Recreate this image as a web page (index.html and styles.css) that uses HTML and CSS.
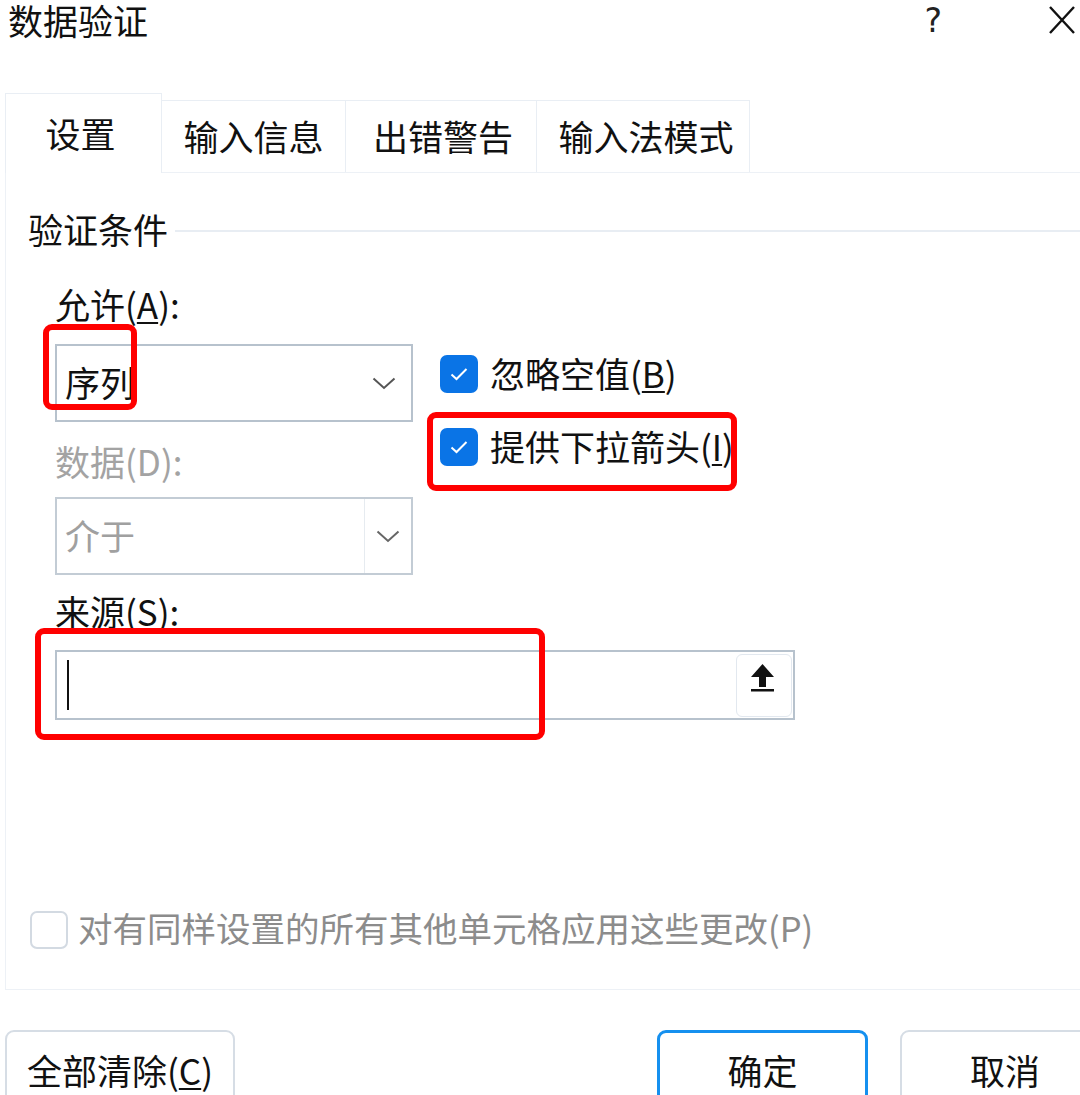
FILE: index.html
```html
<!DOCTYPE html>
<html lang="zh-CN">
<head>
<meta charset="utf-8">
<title>数据验证</title>
<link rel="stylesheet" href="styles.css">
</head>
<body>
<div class="dialog">
  <header class="titlebar">
    <div class="title">数据验证</div>
    <div class="help">?</div>
    <svg class="close" width="28" height="30" viewBox="0 0 28 30"><path d="M2 2 L26 28 M26 2 L2 28" stroke="#111" stroke-width="2.4" fill="none"/></svg>
  </header>

  <nav class="tabs">
    <div class="tab active tab-1">设置</div>
    <div class="tab tab-2">输入信息</div>
    <div class="tab tab-3">出错警告</div>
    <div class="tab tab-4">输入法模式</div>
  </nav>

  <section class="panel">
    <div class="group-head">
      <span class="legend">验证条件</span>
      <span class="rule"></span>
    </div>
    <div class="group-body">
      <div class="row">
        <div class="left-col">
          <div class="label">允许(<u>A</u>):</div>
          <div class="combo">
            <span class="combo-text">序列</span>
            <svg class="chev" width="24" height="13" viewBox="0 0 24 13"><path d="M1.5 1.5 L12 11 L22.5 1.5" stroke="#555" stroke-width="2" fill="none"/></svg>
          </div>
          <div class="label label-2 disabled">数据(D):</div>
          <div class="combo combo-2 disabled">
            <span class="combo-text">介于</span>
            <span class="combo-btn">
              <svg class="chev" width="24" height="13" viewBox="0 0 24 13"><path d="M1.5 1.5 L12 11 L22.5 1.5" stroke="#666" stroke-width="2" fill="none"/></svg>
            </span>
          </div>
        </div>
        <div class="right-col">
          <div class="check">
            <span class="box checked"><svg width="38" height="38" viewBox="0 0 38 38"><path d="M11.5 19.5 L16.5 24 L26.5 14" stroke="#fff" stroke-width="2" fill="none"/></svg></span>
            <span class="check-text">忽略空值(<u>B</u>)</span>
          </div>
          <div class="check check-2">
            <span class="box checked"><svg width="38" height="38" viewBox="0 0 38 38"><path d="M11.5 19.5 L16.5 24 L26.5 14" stroke="#fff" stroke-width="2" fill="none"/></svg></span>
            <span class="check-text">提供下拉箭头(<u>I</u>)</span>
          </div>
        </div>
      </div>
      <div class="label label-src">来源(S):</div>
      <div class="source">
        <span class="caret"></span>
        <span class="ref-btn">
          <svg width="56" height="63" viewBox="0 0 56 63"><path d="M26.5 10 L38 23 L30 23 L30 33 L23 33 L23 23 L15 23 Z" fill="#111"/><rect x="15" y="35" width="23" height="2.5" fill="#111"/></svg>
        </span>
      </div>
    </div>
    <div class="apply-all">
      <span class="box"></span>
      <span class="apply-text">对有同样设置的所有其他单元格应用这些更改(P)</span>
    </div>
  </section>

  <footer class="buttons">
    <div class="btn btn-clear">全部清除(<u>C</u>)</div>
    <div class="btn-group">
      <div class="btn btn-ok">确定</div>
      <div class="btn btn-cancel">取消</div>
    </div>
  </footer>

  <div class="mark mark-1"></div>
  <div class="mark mark-2"></div>
  <div class="mark mark-3"></div>
</div>
</body>
</html>
```

FILE: styles.css
```css
html, body {
  margin: 0;
  padding: 0;
  background: #fff;
  overflow: hidden;
}
body {
  font-family: "Noto Sans CJK SC", "Noto Sans", sans-serif;
  font-size: 35px;
  line-height: 35px;
  color: #111;
}
.dialog {
  position: relative;
  width: 1080px;
  height: 1095px;
  overflow: hidden;
}
u {
  text-decoration-thickness: 2px;
  text-underline-offset: 3px;
}

/* title bar */
.titlebar {
  display: flex;
  align-items: flex-start;
  height: 44px;
  padding-left: 8px;
}
.title {
  line-height: 40px;
}
.help {
  margin-left: auto;
  margin-top: 3px;
  font-family: "DejaVu Sans", sans-serif;
  font-size: 33px;
  line-height: 35px;
  color: #222;
}
.close {
  margin-left: 106px;
  margin-right: 4px;
  margin-top: 5px;
}

/* tabs */
.tabs {
  display: flex;
  align-items: flex-end;
  height: 79px;
  margin-top: 49px;
  margin-left: 5px;
}
.tab {
  box-sizing: border-box;
  height: 72px;
  display: flex;
  align-items: center;
  justify-content: center;
  border: 1px solid #e9eef4;
  border-bottom: none;
  margin-left: -1px;
  background: #fff;
  padding-bottom: 3px;
}
.tab.active {
  height: 80px;
  margin-bottom: -1px;
  margin-left: 0;
  position: relative;
  z-index: 1;
  padding-right: 6px;
}
.tab-1 { width: 157px; }
.tab-2 { width: 185px; }
.tab-3 { width: 192px; padding-left: 4px; }
.tab-4 { width: 214px; padding-left: 6px; }

/* panel */
.panel {
  box-sizing: border-box;
  height: 818px;
  margin-left: 5px;
  margin-right: -20px;
  border: 1px solid #edf1f6;
  padding: 38px 0 40px 22px;
  display: flex;
  flex-direction: column;
}
.group-head {
  display: flex;
  align-items: center;
}
.legend {
  white-space: nowrap;
}
.rule {
  flex: 1;
  height: 2px;
  background: #e8edf3;
  margin-left: 7px;
  margin-top: 4px;
}
.group-body {
  margin-top: 40px;
  padding-left: 27px;
}
.row {
  display: flex;
}
.left-col {
  width: 358px;
}
.label {
  white-space: nowrap;
}
.label-2 { margin-top: 21px; }
.label-src { margin-top: 18px; }
.disabled { color: #a3a3a3; }

.combo {
  box-sizing: border-box;
  height: 78px;
  margin-top: 23px;
  border: 2px solid #b7c2cd;
  display: flex;
  align-items: center;
  padding-left: 8px;
  padding-right: 15px;
  background: #fff;
}
.combo-text {
  flex: 1;
  padding-bottom: 4px;
}
.combo-2 {
  margin-top: 19px;
  border-color: #c3ccd5;
  padding-right: 0;
  color: #a0a0a0;
}
.combo-btn {
  align-self: stretch;
  width: 46px;
  border-left: 1px solid #e6ebf0;
  display: flex;
  align-items: center;
  justify-content: center;
}

.right-col {
  margin-left: 27px;
  margin-top: 69px;
}
.check {
  display: flex;
  align-items: center;
  height: 38px;
}
.check-2 {
  margin-top: 35px;
}
.box {
  box-sizing: border-box;
  width: 38px;
  height: 38px;
  border-radius: 7px;
  border: 2px solid #d3dae2;
  background: #fff;
  flex: none;
}
.box.checked {
  border: none;
  background: #0a74e6;
}
.box svg { display: block; }
.check-text {
  margin-left: 12px;
  white-space: nowrap;
  padding-bottom: 4px;
}

.source {
  box-sizing: border-box;
  width: 740px;
  height: 70px;
  margin-top: 22px;
  border: 2px solid #b7c2cd;
  display: flex;
  align-items: center;
  padding: 0 1px 0 10px;
}
.caret {
  width: 2px;
  height: 50px;
  background: #111;
}
.ref-btn {
  margin-left: auto;
  box-sizing: border-box;
  width: 56px;
  height: 63px;
  border: 1px solid #e2e8ef;
  border-radius: 6px;
  background: #fff;
}
.ref-btn svg {
  display: block;
  margin: -1px 0 0 -1px;
}

.apply-all {
  margin-top: auto;
  display: flex;
  align-items: center;
  padding-left: 2px;
}
.apply-text {
  margin-left: 10px;
  color: #8c8c8c;
  white-space: nowrap;
  font-size: 34.5px;
  padding-bottom: 4px;
}

/* footer buttons */
.buttons {
  display: flex;
  margin-top: 40px;
  margin-left: 5px;
  margin-right: -30px;
}
.btn {
  box-sizing: border-box;
  height: 82px;
  border: 2px solid #d6dde5;
  border-radius: 9px;
  display: flex;
  align-items: center;
  justify-content: center;
  background: #fff;
  white-space: nowrap;
  padding-bottom: 4px;
}
.btn-clear {
  width: 230px;
}
.btn-group {
  margin-left: auto;
  display: flex;
  gap: 32px;
}
.btn-ok {
  width: 211px;
  border: 3px solid #1590ef;
}
.btn-cancel {
  width: 210px;
}

/* red annotation marks */
.mark {
  position: absolute;
  box-sizing: border-box;
  border: 6px solid #ff0000;
  border-radius: 9px;
  z-index: 5;
}
.mark-1 { left: 43px; top: 324px; width: 94px; height: 86px; }
.mark-2 { left: 427px; top: 412px; width: 310px; height: 79px; }
.mark-3 { left: 35px; top: 628px; width: 510px; height: 112px; }
```
